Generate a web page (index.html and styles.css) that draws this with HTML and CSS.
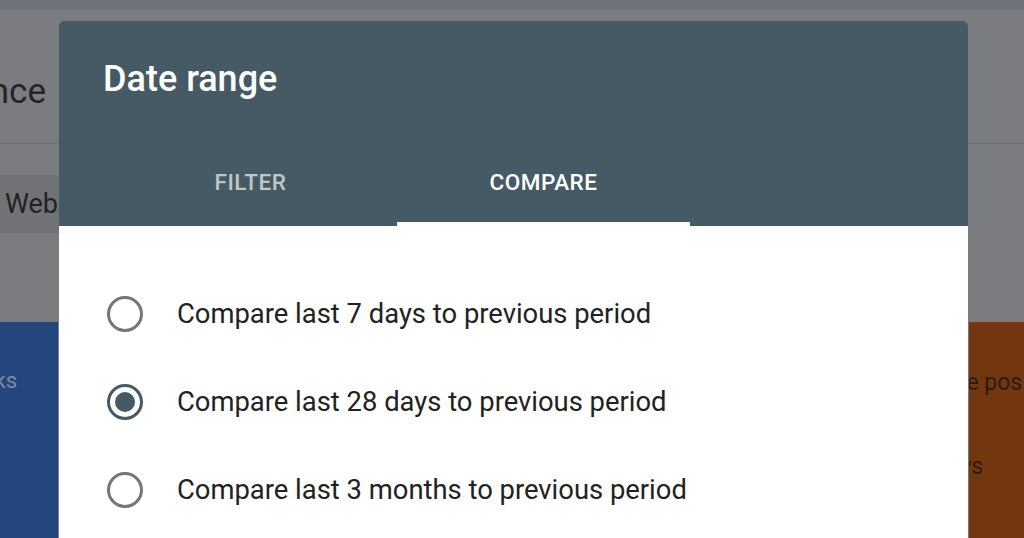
FILE: index.html
```html
<!DOCTYPE html>
<html lang="en">
<head>
  <meta charset="UTF-8" />
  <meta name="viewport" content="width=device-width, initial-scale=1.0" />
  <title>Date range</title>
  <link rel="stylesheet" href="styles.css">
</head>
<body>
  <!-- page behind the dialog, dimmed by the scrim -->
  <div class="page">
    <div class="topbar"></div>
    <div class="page-head">
      <div class="page-title"><span>Performance</span></div>
    </div>
    <div class="filter-row">
      <div class="chip"><span>Web</span></div>
    </div>
    <div class="cards">
      <div class="card card-clicks"><span>Total clicks</span></div>
      <div class="card card-position">
        <span class="card-label">Average position</span>
        <span class="card-sub">views</span>
      </div>
    </div>
  </div>

  <div class="dialog">
    <div class="dialog-head">
      <h1 class="dialog-title">Date range</h1>
      <div class="tabs">
        <div class="tab">Filter</div>
        <div class="tab active">Compare</div>
      </div>
    </div>

    <div class="dialog-body">
      <label class="option">
        <span class="radio"></span>
        <span class="option-text">Compare last 7 days to previous period</span>
      </label>
      <label class="option">
        <span class="radio checked"></span>
        <span class="option-text">Compare last 28 days to previous period</span>
      </label>
      <label class="option">
        <span class="radio"></span>
        <span class="option-text">Compare last 3 months to previous period</span>
      </label>
    </div>
  </div>
</body>
</html>
```

FILE: styles.css
```css
body {
  margin: 0;
  height: 538px;
  overflow: hidden;
  font-family: Roboto, "Noto Sans", sans-serif;
  background: #7b7c80;
}

.page {
  display: flex;
  flex-direction: column;
}

.topbar {
  height: 10px;
  background: #6f737b;
}

.page-head {
  height: 133px;
  border-bottom: 1px solid #6c6d71;
}

.page-title {
  width: 46px;
  overflow: hidden;
  display: flex;
  justify-content: flex-end;
  white-space: nowrap;
  padding-top: 60px;
  font-size: 35px;
  line-height: 44px;
  color: #252526;
}

.filter-row {
  padding-top: 31px;
  height: 147px;
}

.chip {
  width: 59px;
  height: 58px;
  box-sizing: border-box;
  background: #707276;
  display: flex;
  align-items: center;
  padding-left: 5px;
  font-size: 27px;
  color: #222;
}

.cards {
  display: flex;
  justify-content: space-between;
  height: 240px;
}

.card {
  width: 58px;
  overflow: hidden;
  white-space: nowrap;
  font-size: 22px;
}

.card-clicks {
  background: #23467e;
  color: #7e8aa0;
  display: flex;
  justify-content: flex-end;
  padding-top: 46px;
}

.card-clicks span {
  margin-right: 41px;
}

.card-position {
  width: 55px;
  background: #73370f;
  color: #2b1a10;
  display: flex;
  flex-direction: column;
  padding-top: 47px;
  font-size: 23px;
}

.card-label {
  margin-left: -73px;
}

.card-sub {
  margin-top: 57px;
  margin-left: -44px;
}

/* dialog sits over the scrim */
.dialog {
  position: absolute;
  left: 59px;
  top: 21px;
  width: 909px;
  height: 560px;
  background: #fff;
  border-radius: 4px 4px 0 0;
  overflow: hidden;
}

.dialog-head {
  height: 205px;
  background: #455a64;
  display: flex;
  flex-direction: column;
}

.dialog-title {
  margin: 0;
  padding: 36px 0 0 44px;
  font-size: 36px;
  line-height: 44px;
  font-weight: 500;
  color: #fff;
}

.tabs {
  margin-top: auto;
  display: flex;
  padding-left: 45px;
}

.tab {
  width: 293px;
  height: 88px;
  display: flex;
  align-items: center;
  justify-content: center;
  box-sizing: border-box;
  text-transform: uppercase;
  font-size: 22.5px;
  font-weight: 500;
  letter-spacing: 0.5px;
  color: rgba(255, 255, 255, 0.68);
}

.tab.active {
  color: #fff;
  border-bottom: 4px solid #fff;
  padding-top: 4px;
}

.dialog-body {
  padding: 44px 48px 0;
}

.option {
  display: flex;
  align-items: center;
  height: 88px;
  gap: 34px;
}

.radio {
  width: 36px;
  height: 36px;
  flex-shrink: 0;
  box-sizing: border-box;
  border: 3px solid #767676;
  border-radius: 50%;
  display: flex;
  align-items: center;
  justify-content: center;
}

.radio.checked {
  border-color: #455a64;
}

.radio.checked::after {
  content: "";
  width: 20px;
  height: 20px;
  border-radius: 50%;
  background: #455a64;
}

.option-text {
  font-size: 27.4px;
  color: #222;
}
```
